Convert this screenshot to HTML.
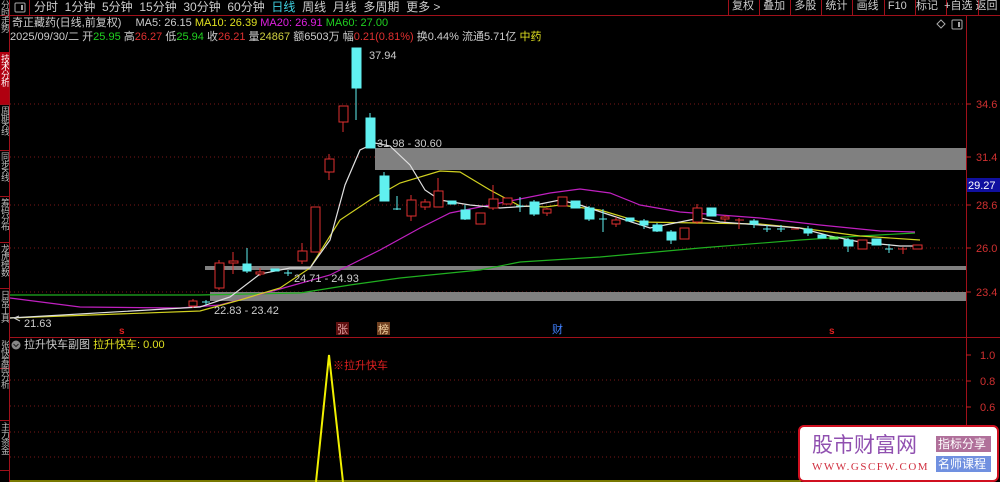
<!DOCTYPE html><html><head><meta charset="utf-8"><style>
body{margin:0;background:#000;width:1000px;height:482px;overflow:hidden;position:relative;font-family:"Liberation Sans","Noto Sans CJK SC",sans-serif;}
.t{position:absolute;white-space:nowrap;font-size:11px;line-height:13px;}
.s{position:absolute;left:0;width:9px;overflow:hidden;writing-mode:vertical-rl;font-size:9px;line-height:9px;color:#bbb;letter-spacing:-1px;}
</style></head><body>
<svg width="1000" height="482" style="position:absolute;left:0;top:0" font-family="Liberation Sans, Noto Sans CJK SC, sans-serif">
<line x1="0" y1="15.5" x2="1000" y2="15.5" stroke="#a0101a"/>
<line x1="9.5" y1="0" x2="9.5" y2="482" stroke="#a0101a"/>
<line x1="966.5" y1="15" x2="966.5" y2="482" stroke="#a0101a"/>
<line x1="10" y1="337.5" x2="1000" y2="337.5" stroke="#a0101a"/>
<line x1="29.5" y1="0" x2="29.5" y2="15" stroke="#a0101a"/>
<rect x="0" y="52" width="9" height="52" fill="#b00010"/>
<g stroke="#a0101a"><line x1="0" y1="104.5" x2="9" y2="104.5"/><line x1="0" y1="150.5" x2="9" y2="150.5"/><line x1="0" y1="196.5" x2="9" y2="196.5"/><line x1="0" y1="242.5" x2="9" y2="242.5"/><line x1="0" y1="288.5" x2="9" y2="288.5"/><line x1="0" y1="368.5" x2="9" y2="368.5"/><line x1="0" y1="420.5" x2="9" y2="420.5"/><line x1="0" y1="470.5" x2="9" y2="470.5"/>
<line x1="728.5" y1="0" x2="728.5" y2="15"/><line x1="759.5" y1="0" x2="759.5" y2="15"/><line x1="790.5" y1="0" x2="790.5" y2="15"/><line x1="821.5" y1="0" x2="821.5" y2="15"/><line x1="852.5" y1="0" x2="852.5" y2="15"/><line x1="884.5" y1="0" x2="884.5" y2="15"/><line x1="915.5" y1="0" x2="915.5" y2="15"/><line x1="946.5" y1="0" x2="946.5" y2="15"/><line x1="978.5" y1="0" x2="978.5" y2="15"/></g>
<rect x="15" y="3" width="10" height="9" fill="none" stroke="#aaa" rx="1"/><rect x="21" y="5" width="2" height="5" fill="#aaa"/>
<rect x="952" y="20" width="10" height="9" fill="none" stroke="#aaa" rx="1"/><rect x="958" y="22" width="2" height="5" fill="#aaa"/>
<path d="M941 20 l4 4 -4 4 -4 -4z" fill="none" stroke="#aaa"/>
<g stroke="#7a1818" stroke-dasharray="1 3"><line x1="10" y1="104" x2="966" y2="104"/><line x1="10" y1="157" x2="966" y2="157"/><line x1="10" y1="205" x2="966" y2="205"/><line x1="10" y1="248" x2="966" y2="248"/><line x1="10" y1="292" x2="966" y2="292"/>
<line x1="10" y1="380" x2="966" y2="380"/><line x1="10" y1="406" x2="966" y2="406"/><line x1="10" y1="432" x2="966" y2="432"/><line x1="10" y1="457" x2="966" y2="457"/></g>
<g stroke="#c02020"><line x1="966" y1="104" x2="971" y2="104"/><line x1="966" y1="157" x2="971" y2="157"/><line x1="966" y1="205" x2="971" y2="205"/><line x1="966" y1="248" x2="971" y2="248"/><line x1="966" y1="292" x2="971" y2="292"/><line x1="966" y1="355" x2="971" y2="355"/><line x1="966" y1="381" x2="971" y2="381"/><line x1="966" y1="407" x2="971" y2="407"/></g>
<g fill="#d03030" font-size="11"><text x="976" y="108">34.6</text><text x="976" y="161">31.4</text><text x="976" y="209">28.6</text><text x="976" y="252">26.0</text><text x="976" y="296">23.4</text><text x="980" y="359">1.0</text><text x="980" y="385">0.8</text><text x="980" y="411">0.6</text></g>
<rect x="967" y="178" width="33" height="14" fill="#1010a0"/><text x="968" y="189" fill="#fff" font-size="11">29.27</text>
<rect x="375" y="148" width="591" height="22" fill="#808080"/>
<rect x="205" y="266" width="761" height="4" fill="#808080"/>
<rect x="210" y="292" width="756" height="9" fill="#808080"/>
<g fill="none" stroke-width="1.2">
<polyline stroke="#20b020" points="10,295 200,295 300,293 350,285 400,278 480,270 520,262 600,257 700,248 800,240 860,236 915,233"/>
<polyline stroke="#c020c0" points="10,298 80,307 180,308 220,305 280,289 330,275 380,250 420,228 450,213 490,205 550,193 580,189 610,193 640,205 680,212 760,218 820,225 880,231 915,232"/>
<polyline stroke="#d0d020" points="10,318 200,311 240,300 280,288 310,268 340,220 370,200 400,183 440,171 460,172 490,190 520,206 545,207 560,205 600,210 640,222 700,223 760,224 800,228 860,236 920,240"/>
<polyline stroke="#e0e0e0" points="10,318 200,307 230,297 260,274 290,268 310,268 330,240 345,185 360,150 375,143 390,146 410,165 425,190 440,200 470,205 500,208 530,206 560,200 580,205 610,215 650,228 680,222 700,218 720,222 760,225 800,228 830,236 860,242 900,246 920,246"/>
</g>
<g stroke-width="1">
<g stroke="#e03030" fill="#000">
<line x1="193" y1="299" x2="193" y2="308"/><rect x="189" y="301" width="8" height="5"/>
<line x1="219" y1="260" x2="219" y2="290"/><rect x="215" y="263" width="9" height="25"/>
<line x1="233" y1="252" x2="233" y2="274"/><rect x="229" y="261" width="9" height="2"/>
<line x1="260" y1="268" x2="260" y2="276"/><rect x="256" y="272" width="8" height="2"/>
<line x1="302" y1="243" x2="302" y2="264"/><rect x="298" y="251" width="9" height="10"/>
<rect x="311" y="207" width="9" height="45"/>
<line x1="329" y1="154" x2="329" y2="180"/><rect x="325" y="159" width="9" height="13"/>
<line x1="343" y1="106" x2="343" y2="132"/><rect x="339" y="106" width="9" height="16"/>
<line x1="411" y1="195" x2="411" y2="221"/><rect x="407" y="200" width="9" height="16"/>
<line x1="425" y1="199" x2="425" y2="210"/><rect x="421" y="202" width="9" height="5"/>
<line x1="438" y1="178" x2="438" y2="207"/><rect x="434" y="191" width="9" height="16"/>
<rect x="476" y="213" width="9" height="11"/>
<line x1="493" y1="185" x2="493" y2="210"/><rect x="489" y="199" width="9" height="9"/>
<rect x="503" y="198" width="9" height="6"/>
<line x1="547" y1="208" x2="547" y2="216"/><rect x="543" y="209" width="8" height="4"/>
<rect x="558" y="197" width="9" height="9"/>
<line x1="616" y1="217" x2="616" y2="227"/><rect x="612" y="220" width="8" height="4"/>
<rect x="680" y="228" width="9" height="11"/>
<line x1="697" y1="204" x2="697" y2="224"/><rect x="693" y="208" width="9" height="14"/>
<line x1="725" y1="215" x2="725" y2="222"/><rect x="721" y="217" width="8" height="2"/>
<line x1="739" y1="218" x2="739" y2="229"/><line x1="735" y1="220" x2="744" y2="220"/>
<line x1="791" y1="229" x2="799" y2="229"/>
<rect x="858" y="240" width="9" height="9"/>
<line x1="903" y1="247" x2="903" y2="254"/><line x1="898" y1="249" x2="907" y2="249"/>
<rect x="913" y="245" width="9" height="4"/>
</g>
<g stroke="#60f0f0" fill="#60f0f0">
<line x1="206" y1="300" x2="206" y2="305"/><line x1="202" y1="302" x2="210" y2="302"/>
<line x1="247" y1="248" x2="247" y2="273"/><rect x="243" y="264" width="8" height="7"/>
<rect x="271" y="269" width="8" height="2"/>
<line x1="288" y1="270" x2="288" y2="276"/><line x1="284" y1="273" x2="292" y2="273"/>
<line x1="356" y1="48" x2="356" y2="120"/><rect x="352" y="48" width="9" height="40"/>
<line x1="370" y1="113" x2="370" y2="148"/><rect x="366" y="118" width="9" height="30"/>
<line x1="384" y1="172" x2="384" y2="201"/><rect x="380" y="176" width="9" height="25"/>
<line x1="397" y1="196" x2="397" y2="210"/><line x1="393" y1="209" x2="401" y2="209"/>
<rect x="448" y="201" width="8" height="3"/>
<line x1="465" y1="205" x2="465" y2="220"/><rect x="461" y="210" width="9" height="9"/>
<line x1="520" y1="197" x2="520" y2="212"/><line x1="516" y1="206" x2="524" y2="206"/>
<line x1="534" y1="200" x2="534" y2="216"/><rect x="530" y="202" width="9" height="12"/>
<rect x="571" y="201" width="9" height="7"/>
<line x1="589" y1="206" x2="589" y2="221"/><rect x="585" y="208" width="9" height="11"/>
<line x1="603" y1="209" x2="603" y2="232"/><line x1="599" y1="219" x2="607" y2="219"/>
<rect x="626" y="218" width="8" height="3"/>
<line x1="644" y1="219" x2="644" y2="229"/><rect x="640" y="221" width="8" height="4"/>
<line x1="657" y1="223" x2="657" y2="232"/><rect x="653" y="225" width="9" height="6"/>
<line x1="671" y1="230" x2="671" y2="244"/><rect x="667" y="232" width="9" height="8"/>
<rect x="707" y="208" width="9" height="8"/>
<line x1="754" y1="219" x2="754" y2="228"/><rect x="750" y="221" width="8" height="3"/>
<line x1="767" y1="225" x2="767" y2="232"/><line x1="763" y1="229" x2="771" y2="229"/>
<line x1="781" y1="225" x2="781" y2="232"/><line x1="777" y1="229" x2="785" y2="229"/>
<line x1="808" y1="226" x2="808" y2="236"/><rect x="804" y="229" width="8" height="4"/>
<rect x="818" y="235" width="8" height="3"/>
<rect x="830" y="237" width="8" height="2" stroke="#60f060" fill="#60f060"/>
<line x1="848" y1="238" x2="848" y2="252"/><rect x="844" y="240" width="9" height="6"/>
<rect x="872" y="239" width="9" height="6"/>
<line x1="889" y1="244" x2="889" y2="253"/><line x1="885" y1="249" x2="893" y2="249"/>
</g>
</g>
<g fill="#ccc" font-size="11"><text x="369" y="59">37.94</text><text x="377" y="147">31.98 - 30.60</text><text x="294" y="282">24.71 - 24.93</text><text x="214" y="314">22.83 - 23.42</text><text x="24" y="327">21.63</text></g>
<path d="M14 318 l6 3 M14 318 l5 -2" stroke="#ccc" fill="none"/>
<text x="119" y="334" fill="#e02020" font-size="10" font-weight="bold">s</text>
<text x="829" y="334" fill="#e02020" font-size="10" font-weight="bold">s</text>
<rect x="336" y="322" width="13" height="13" fill="#601010"/><text x="337" y="333" fill="#e0a0a0" font-size="11">张</text>
<rect x="377" y="322" width="13" height="13" fill="#704020"/><text x="378" y="333" fill="#f0d0a0" font-size="11">榜</text>
<text x="552" y="333" fill="#4080ff" font-size="11">财</text>
<circle cx="16" cy="345" r="4.5" fill="#888"/><path d="M13.5 344 l2.5 2.5 2.5 -2.5" stroke="#222" fill="none"/>
<polyline points="316,482 329,355 343,482" fill="none" stroke="#f0f000" stroke-width="2"/>
<line x1="10" y1="481" x2="966" y2="481" stroke="#f0f000"/>
<text x="333" y="369" fill="#e02020" font-size="11">※拉升快车</text>
<rect x="799" y="426" width="199" height="55" rx="5" fill="#fff" stroke="#d01020" stroke-width="2"/>
<text x="812" y="452" fill="#9050b0" font-size="21">股市财富网</text>
<text x="812" y="470" fill="#d03040" font-size="11" font-family="Liberation Serif, serif" letter-spacing="1.5">WWW.GSCFW.COM</text>
<rect x="936" y="436" width="55" height="16" fill="#b0709a"/><text x="938" y="448" fill="#fff" font-size="12">指标分享</text>
<rect x="936" y="456" width="55" height="16" fill="#7090e0"/><text x="938" y="468" fill="#fff" font-size="12">名师课程</text>
</svg>
<div class="t" style="left:34px;top:0;color:#ccc;font-size:12px;line-height:14px">分时&nbsp; 1分钟&nbsp; 5分钟&nbsp; 15分钟&nbsp; 30分钟&nbsp; 60分钟&nbsp; <span style="color:#40d0e0">日线</span>&nbsp; 周线&nbsp; 月线&nbsp; 多周期&nbsp; 更多 &gt;</div>
<div class="t" style="left:732px;top:0;color:#ccc;">复权&nbsp;&nbsp; 叠加&nbsp;&nbsp; 多股&nbsp;&nbsp; 统计&nbsp;&nbsp; 画线&nbsp;&nbsp; F10&nbsp;&nbsp; 标记&nbsp; +自选&nbsp;返回</div>
<div class="t" style="left:12px;top:17px;color:#ccc;">奇正藏药(日线,前复权) <span style="display:inline-block;width:8px"></span> MA5: 26.15 <span style="color:#e0e020">MA10: 26.39</span> <span style="color:#e020e0">MA20: 26.91</span> <span style="color:#20d020">MA60: 27.00</span></div>
<div class="t" style="left:10px;top:31px;color:#ccc;">2025/09/30/二 开<span style="color:#20d020">25.95</span> 高<span style="color:#e03030">26.27</span> 低<span style="color:#20d020">25.94</span> 收<span style="color:#e03030">26.21</span> 量<span style="color:#d0d040">24867</span> 额6503万 幅<span style="color:#e03030">0.21(0.81%)</span> 换0.44% 流通5.71亿 <span style="color:#e0e020">中药</span></div>
<div class="t" style="left:24px;top:339px;color:#ccc;">拉升快车副图 <span style="color:#e0e020">拉升快车: 0.00</span></div>
<div class="s" style="top:0;height:51px">分时走势</div>
<div class="s" style="top:54px;height:49px;color:#fff">技术分析</div>
<div class="s" style="top:106px;height:43px">周期K线</div>
<div class="s" style="top:152px;height:43px">同步K线</div>
<div class="s" style="top:198px;height:43px">筹码分布</div>
<div class="s" style="top:244px;height:43px">龙虎榜数</div>
<div class="s" style="top:290px;height:45px">日常工具</div>
<div class="s" style="top:340px;height:78px">张快筹图分析</div>
<div class="s" style="top:422px;height:46px">主力资金</div>
</body></html>
